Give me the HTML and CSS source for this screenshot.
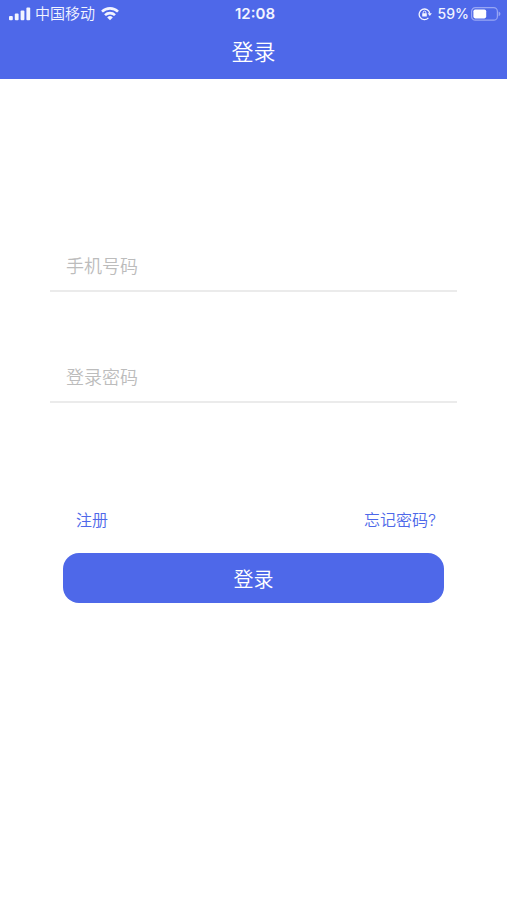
FILE: index.html
```html
<!DOCTYPE html>
<html lang="zh-CN">
<head>
<meta charset="utf-8">
<meta name="viewport" content="width=device-width, initial-scale=1">
<title>登录</title>
<link rel="stylesheet" href="styles.css">
</head>
<body>
<header class="header">
  <div class="status">
    <div class="status-side">
      <svg width="22" height="14" viewBox="0 0 22 14" fill="currentColor" aria-hidden="true">
        <rect x="0" y="9" width="3.8" height="4.2" rx="1"/>
        <rect x="5.8" y="6.5" width="3.8" height="6.7" rx="1"/>
        <rect x="11.6" y="3.5" width="3.8" height="9.7" rx="1"/>
        <rect x="17.4" y="0.5" width="3.8" height="12.7" rx="1"/>
      </svg>
      <span class="carrier">中国移动</span>
      <svg width="18" height="14" viewBox="0 0 18 14" fill="none" stroke="currentColor" stroke-width="2.6" aria-hidden="true">
        <path d="M1 4.6a11.6 11.6 0 0 1 16 0"/>
        <path d="M4 8.1a7.2 7.2 0 0 1 10 0"/>
        <path d="M9 13.2 6.2 10.4a4 4 0 0 1 5.6 0z" fill="currentColor" stroke="none"/>
      </svg>
    </div>
    <time class="clock">12:08</time>
    <div class="status-side status-right">
      <svg width="14" height="14" viewBox="0 0 14 14" fill="none" stroke="currentColor" aria-hidden="true">
        <path d="M10.4 10.9A5.3 5.3 0 1 1 11.7 6.4" stroke-width="1.3"/>
        <path d="M9.7 6.2h4.2l-2.1 2.8z" fill="currentColor" stroke="none"/>
        <rect x="4.2" y="6.2" width="4.6" height="3.4" rx="0.5" fill="currentColor" stroke="none"/>
        <path d="M5.2 6.5V5.4a1.3 1.3 0 0 1 2.6 0v1.1" stroke-width="1"/>
      </svg>
      <span class="percent">59%</span>
      <svg width="30" height="14" viewBox="0 0 30 14" aria-hidden="true">
        <rect x="0.6" y="0.6" width="25.8" height="12.6" rx="3.8" fill="none" stroke="#98a6f4" stroke-width="1.2"/>
        <rect x="2.4" y="2.4" width="12.8" height="9" rx="1.8" fill="#fff"/>
        <path d="M27.6 4.6c2.4.8 2.4 3.8 0 4.6z" fill="#98a6f4"/>
      </svg>
    </div>
  </div>
  <h1 class="title">登录</h1>
</header>
<main class="main">
  <form class="form">
    <input class="field" type="tel" placeholder="手机号码" aria-label="手机号码">
    <input class="field" type="password" placeholder="登录密码" aria-label="登录密码">
    <div class="actions">
      <nav class="links">
        <a class="link" href="#register">注册</a>
        <a class="link" href="#forgot">忘记密码?</a>
      </nav>
      <button class="submit" type="button">登录</button>
    </div>
  </form>
</main>
</body>
</html>
```
FILE: styles.css
```css
* {
  box-sizing: border-box;
}

body {
  margin: 0;
  background: #fff;
  font-family: Inter, "Noto Sans CJK SC", sans-serif;
  font-weight: 350;
}

.header {
  background: #4e68e9;
  color: #fff;
}

.status {
  display: grid;
  grid-template-columns: 1fr auto 1fr;
  align-items: center;
  height: 27px;
  padding: 0 6px 0 9px;
  color: #f2f4ff;
}

.status-side {
  display: flex;
  align-items: center;
  gap: 4px;
}

.status-right {
  gap: 2px;
  justify-content: flex-end;
}

.carrier {
  margin-right: 2px;
  font-size: 15px;
  line-height: 24px;
}

.clock {
  font-size: 15px;
  font-weight: 600;
  line-height: 24px;
}

.percent {
  margin-left: 4px;
  font-size: 14px;
  font-weight: 500;
  line-height: 24px;
}

.title {
  margin: 0;
  height: 52px;
  font-size: 22px;
  font-weight: inherit;
  line-height: 50px;
  text-align: center;
}

.main {
  padding: 163px 50px 40px;
}

.form {
  display: flex;
  flex-direction: column;
  gap: 61px;
}

.field {
  width: 100%;
  height: 50px;
  padding: 0 16px;
  border: 0;
  border-bottom: 2px solid #ebebeb;
  border-radius: 0;
  outline: 0;
  background: none;
  color: #333;
  font-family: inherit;
  font-size: 18px;
  font-weight: inherit;
}

.field::placeholder {
  color: #bcbcbc;
}

.actions {
  padding: 44px 13px 0;
}

.links {
  display: flex;
  justify-content: space-between;
  padding: 0 8px 0 13px;
}

.link {
  color: #4e68e9;
  font-size: 16px;
  line-height: 24px;
  text-decoration: none;
}

.submit {
  width: 100%;
  height: 50px;
  margin-top: 21px;
  padding: 0;
  border: 0;
  border-radius: 16px;
  background: #4e68e9;
  color: #fff;
  font-family: inherit;
  font-size: 20px;
  font-weight: inherit;
}
```
